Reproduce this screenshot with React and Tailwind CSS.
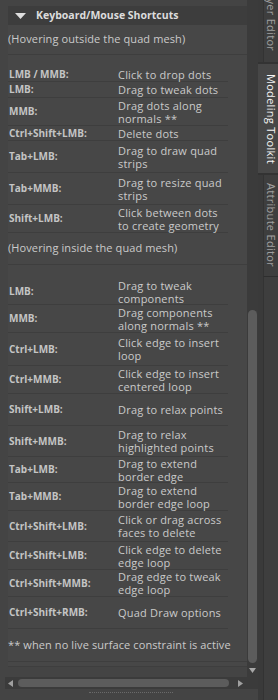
import React from "react";

const S1 = [
  ["LMB / MMB:", ["Click to drop dots"], "h-[14px]"],
  ["LMB:", ["Drag to tweak dots"], "h-[16px]"],
  ["MMB:", ["Drag dots along", "normals **"], "h-[28px]"],
  ["Ctrl+Shift+LMB:", ["Delete dots"], "h-[15px]"],
  ["Tab+LMB:", ["Drag to draw quad", "strips"], "h-[32px]"],
  ["Tab+MMB:", ["Drag to resize quad", "strips"], "h-[32px]"],
  ["Shift+LMB:", ["Click between dots", "to create geometry"], "h-[28px]"],
];

const S2 = [
  ["LMB:", ["Drag to tweak", "components"], "h-[26px]"],
  ["MMB:", ["Drag components", "along normals **"], "h-[28px]"],
  ["Ctrl+LMB:", ["Click edge to insert", "loop"], "h-[33px]"],
  ["Ctrl+MMB:", ["Click edge to insert", "centered loop"], "h-[28px]"],
  ["Shift+LMB:", ["Drag to relax points"], "h-[32px]"],
  ["Shift+MMB:", ["Drag to relax", "highlighted points"], "h-[31px]"],
  ["Tab+LMB:", ["Drag to extend", "border edge"], "h-[26px]"],
  ["Tab+MMB:", ["Drag to extend", "border edge loop"], "h-[28px]"],
  ["Ctrl+Shift+LMB:", ["Click or drag across", "faces to delete"], "h-[31px]"],
  ["Ctrl+Shift+LMB:", ["Click edge to delete", "edge loop"], "h-[28px]"],
  ["Ctrl+Shift+MMB:", ["Drag edge to tweak", "edge loop"], "h-[27px]"],
  ["Ctrl+Shift+RMB:", ["Quad Draw options"], "h-[32px]"],
];

function Row({ label, lines, h }) {
  return (
    <div className={`flex items-center w-[220px] border-b border-[#3e3e3e] ${h} shrink-0`}>
      <div className="w-[110px] pl-[1px] font-bold text-[10px] leading-[13px] text-[#c4c4c4] whitespace-nowrap">{label}</div>
      <div className="flex flex-col text-[11px] leading-[13px] text-[#cacaca] tracking-[0.2px] whitespace-nowrap">
        {lines.map((l, i) => (
          <span key={i} className="block h-[13px] leading-[13px]">{l}</span>
        ))}
      </div>
    </div>
  );
}

export default function App() {
  return (
    <div
      className="w-[278px] h-[700px] flex bg-[#444444] overflow-hidden"
      style={{ fontFamily: '"Open Sans", "Noto Sans", sans-serif' }}
    >
      {/* left main */}
      <div className="w-[258px] flex flex-col">
        <div className="flex h-[677px]">
          <div className="w-[8px] bg-[#444444]" />
          <div className="w-[239px] flex flex-col">
            <div className="h-[6px]" />
            <div className="h-[19px] bg-[#3d3d3d] flex items-center shrink-0">
              <svg width="11" height="6" viewBox="0 0 11 6" className="ml-[7px]">
                <polygon points="0,0 11,0 5.5,6" fill="#dedede" />
              </svg>
              <span className="ml-[10px] font-bold text-[10.5px] text-[#dcdcdc]">
                Keyboard/Mouse Shortcuts
              </span>
            </div>
            <div className="bg-[#474747] flex flex-col flex-1">
              <div className="h-[30px] shrink-0 flex items-center border-b border-[#3e3e3e] text-[11px] text-[#cacaca] tracking-[0.1px] whitespace-nowrap">
                (Hovering outside the quad mesh)
              </div>
              <div className="h-[13px] shrink-0" />
              {S1.map((r, i) => (
                <Row key={i} label={r[0]} lines={r[1]} h={r[2]} />
              ))}
              <div className="h-[32px] shrink-0 flex items-center border-b border-[#3e3e3e] text-[11px] text-[#cacaca] tracking-[0.1px] whitespace-nowrap">
                (Hovering inside the quad mesh)
              </div>
              <div className="h-[14px] shrink-0" />
              {S2.map((r, i) => (
                <Row key={i} label={r[0]} lines={r[1]} h={r[2]} />
              ))}
              <div className="h-[33px] shrink-0 flex items-center border-b border-[#3e3e3e] text-[11px] text-[#cacaca] tracking-[0.1px] whitespace-nowrap">
                ** when no live surface constraint is active
              </div>
              <div className="h-[5px] shrink-0 border-b border-[#3e3e3e]" />
              <div className="flex-1 bg-[#444444]" />
            </div>
          </div>
          {/* vertical scrollbar */}
          <div className="w-[11px] bg-[#3b3b3b] flex flex-col items-center">
            <div className="h-[310px] shrink-0" />
            <div className="w-[9px] h-[353px] rounded-full bg-[#5c5c5c] shrink-0" />
            <div className="h-[5px] shrink-0" />
            <svg width="7" height="5" viewBox="0 0 7 5">
              <polygon points="0,0 7,0 3.5,5" fill="#a8a8a8" />
            </svg>
          </div>
        </div>
        {/* horizontal scrollbar */}
        <div className="h-[12px] flex shrink-0">
          <div className="w-[5px]" />
          <div className="w-[242px] bg-[#3b3b3b] flex items-center">
            <svg width="5" height="7" viewBox="0 0 5 7" className="ml-[3px]">
              <polygon points="5,0 5,7 0,3.5" fill="#a0a0a0" />
            </svg>
            <div className="ml-[5px] w-[211px] h-[8px] rounded-full bg-[#5c5c5c]" />
            <svg width="5" height="7" viewBox="0 0 5 7" className="ml-[9px]">
              <polygon points="0,0 0,7 5,3.5" fill="#a0a0a0" />
            </svg>
          </div>
          <div className="w-[11px] bg-[#3b3b3b]" />
        </div>
        <div className="flex-1 flex justify-start pt-[3px]">
          <div className="ml-[89px] w-[84px] h-[1px] border-t border-dotted border-[#6a6a6a]" />
        </div>
      </div>
      {/* tabs column */}
      <div className="w-[20px] flex flex-col bg-[#3a3a3a]">
        <div className="ml-[5px] h-[62px] bg-[#3e3e3e] border-l border-[#333] flex justify-center items-end pb-[11px] overflow-hidden shrink-0">
          <span className="text-[11px] leading-[14px] tracking-[0.3px] text-[#a0a0a0] whitespace-nowrap [writing-mode:vertical-rl]">
            Layer Editor
          </span>
        </div>
        <div className="h-[2px] bg-[#333] shrink-0" />
        <div className="h-[109px] bg-[#474747] flex justify-center pl-[5px] pt-[10px] shrink-0">
          <span className="text-[11px] leading-[14px] tracking-[0.3px] text-[#f4f4f4] whitespace-nowrap [writing-mode:vertical-rl]">
            Modeling Toolkit
          </span>
        </div>
        <div className="h-[2px] bg-[#333] shrink-0" />
        <div className="ml-[5px] h-[102px] bg-[#3e3e3e] border-l border-[#333] border-b border-b-[#2e2e2e] flex justify-center pt-[8px] shrink-0">
          <span className="text-[11px] leading-[14px] tracking-[0.3px] text-[#a0a0a0] whitespace-nowrap [writing-mode:vertical-rl]">
            Attribute Editor
          </span>
        </div>
        <div className="flex-1 ml-[5px] bg-[#3e3e3e] border-l border-[#333]" />
      </div>
    </div>
  );
}
